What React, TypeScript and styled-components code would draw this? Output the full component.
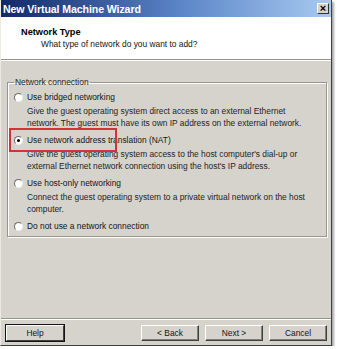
import React, { FC } from "react"
import styled, { createGlobalStyle } from "styled-components"

const GlobalStyle = createGlobalStyle`
  html, body {
    margin: 0;
    padding: 0;
    background: rgb(255, 255, 255);
  }
  body {
    font-family: "Liberation Sans", Arial, sans-serif;
  }
`

const Window = styled.div`
  width: 332px;
  height: 346px;
  display: flex;
  flex-direction: column;
  background: rgb(214, 211, 204);
  border-left: 1px solid rgb(236, 233, 226);
  border-right: 1px solid rgb(64, 64, 64);
  border-bottom: 1px solid rgb(64, 64, 64);
  box-shadow: 2px 2px 2px rgba(0, 0, 0, 0.35);
  box-sizing: border-box;
`

const TitleBar = styled.div`
  height: 17px;
  display: flex;
  align-items: center;
  justify-content: space-between;
  padding: 0 2px 0 2px;
  background: linear-gradient(to right, rgb(16, 40, 104), rgb(92, 134, 200) 55%, rgb(168, 202, 240));
`

const TitleText = styled.span`
  color: rgb(255, 255, 255);
  font-weight: bold;
  font-size: 10.6px;
  letter-spacing: -0.1px;
`

const CloseButton = styled.div`
  width: 10px;
  height: 9px;
  display: flex;
  align-items: center;
  justify-content: center;
  background: rgb(214, 211, 204);
  border: 1px solid;
  border-color: rgb(255, 255, 255) rgb(50, 50, 50) rgb(50, 50, 50) rgb(255, 255, 255);
  font-size: 11px;
  font-weight: bold;
  line-height: 1;
  color: rgb(0, 0, 0);
`

const Header = styled.div`
  height: 43px;
  background: rgb(255, 255, 255);
  padding: 9px 0 0 20px;
  box-sizing: border-box;
  border-bottom: 1px solid rgb(150, 148, 142);
  box-shadow: 0 1px 0 rgb(255, 255, 255);
`

const HeaderTitle = styled.div`
  font-weight: bold;
  font-size: 9.2px;
  color: rgb(0, 0, 0);
  line-height: 12px;
`

const HeaderSub = styled.div`
  font-size: 8.4px;
  color: rgb(20, 20, 20);
  padding-left: 20px;
  line-height: 13px;
`

const Body = styled.div`
  flex: 1;
  padding: 17px 4px 0 6px;
`

const GroupBox = styled.fieldset`
  margin: 0;
  height: 160px;
  box-sizing: border-box;
  padding: 4px 6px 0 6px;
  border: 1px solid rgb(150, 148, 142);
  box-shadow: inset 1px 1px 0 rgb(255, 255, 255), 1px 1px 0 rgb(255, 255, 255);
  display: flex;
  flex-direction: column;
  gap: 5px;
`

const Legend = styled.legend`
  font-size: 8.4px;
  color: rgb(30, 30, 30);
  padding: 0 1px;
  margin-left: 0;
`

const Option = styled.div<{ highlighted?: boolean }>`
  position: relative;
  ${props =>
    props.highlighted &&
    `
    &::after {
      content: "";
      position: absolute;
      left: -5px;
      top: -6px;
      width: 108px;
      height: 24px;
      border: 2px solid rgb(214, 48, 56);
      box-sizing: border-box;
      pointer-events: none;
    }
  `}
`

const OptionLabel = styled.div`
  display: flex;
  align-items: center;
  gap: 4px;
  font-size: 8.4px;
  line-height: 12px;
  color: rgb(20, 20, 20);
`

const Radio = styled.span<{ checked?: boolean }>`
  width: 9px;
  height: 9px;
  border-radius: 50%;
  background: rgb(255, 255, 255);
  border: 1px solid;
  border-color: rgb(110, 108, 104) rgb(240, 238, 234) rgb(240, 238, 234) rgb(110, 108, 104);
  box-sizing: border-box;
  display: flex;
  align-items: center;
  justify-content: center;
  flex-shrink: 0;

  &::after {
    content: "";
    width: 3px;
    height: 3px;
    border-radius: 50%;
    background: ${props => (props.checked ? "rgb(0, 0, 0)" : "transparent")};
  }
`

const Description = styled.div`
  font-size: 8.4px;
  line-height: 12px;
  color: rgb(30, 30, 30);
  padding-left: 13px;
  margin-top: 2px;
`

const Footer = styled.div`
  border-top: 1px solid rgb(150, 148, 142);
  box-shadow: inset 0 1px 0 rgb(255, 255, 255);
  height: 27px;
  display: flex;
  align-items: center;
  padding: 1px 4px 0 4px;
  box-sizing: border-box;
`

const Button = styled.button<{ focused?: boolean }>`
  width: 58px;
  height: 16px;
  padding: 0;
  font-family: "Liberation Sans", Arial, sans-serif;
  font-size: 8.4px;
  color: rgb(20, 20, 20);
  background: rgb(214, 211, 204);
  border: 1px solid;
  border-color: rgb(255, 255, 255) rgb(64, 64, 64) rgb(64, 64, 64) rgb(255, 255, 255);
  box-shadow: ${props =>
    props.focused ? "0 0 0 1px rgb(20, 20, 20)" : "inset -1px -1px 0 rgb(128, 128, 128)"};
  margin-left: ${props => (props.focused ? "1px" : "0")};
`

const Spacer = styled.div`
  flex: 1;
`

const ButtonGroup = styled.div`
  display: flex;
  gap: 6px;
`

interface NetworkOption {
  label: string
  description?: string[]
  checked?: boolean
}

const options: NetworkOption[] = [
  {
    label: "Use bridged networking",
    description: [
      "Give the guest operating system direct access to an external Ethernet",
      "network. The guest must have its own IP address on the external network."
    ]
  },
  {
    label: "Use network address translation (NAT)",
    checked: true,
    description: [
      "Give the guest operating system access to the host computer's dial-up or",
      "external Ethernet network connection using the host's IP address."
    ]
  },
  {
    label: "Use host-only networking",
    description: [
      "Connect the guest operating system to a private virtual network on the host",
      "computer."
    ]
  },
  { label: "Do not use a network connection" }
]

const App: FC = () => {
  return (
    <>
      <GlobalStyle />
      <Window>
        <TitleBar>
          <TitleText>New Virtual Machine Wizard</TitleText>
          <CloseButton>×</CloseButton>
        </TitleBar>
        <Header>
          <HeaderTitle>Network Type</HeaderTitle>
          <HeaderSub>What type of network do you want to add?</HeaderSub>
        </Header>
        <Body>
          <GroupBox>
            <Legend>Network connection</Legend>
            {options.map(opt => (
              <Option key={opt.label} highlighted={opt.checked}>
                <OptionLabel>
                  <Radio checked={opt.checked} />
                  {opt.label}
                </OptionLabel>
                {opt.description && (
                  <Description>
                    {opt.description.map(line => (
                      <div key={line}>{line}</div>
                    ))}
                  </Description>
                )}
              </Option>
            ))}
          </GroupBox>
        </Body>
        <Footer>
          <Button focused>Help</Button>
          <Spacer />
          <ButtonGroup>
            <Button>&lt; Back</Button>
            <Button>Next &gt;</Button>
            <Button>Cancel</Button>
          </ButtonGroup>
        </Footer>
      </Window>
    </>
  )
}

export default App
